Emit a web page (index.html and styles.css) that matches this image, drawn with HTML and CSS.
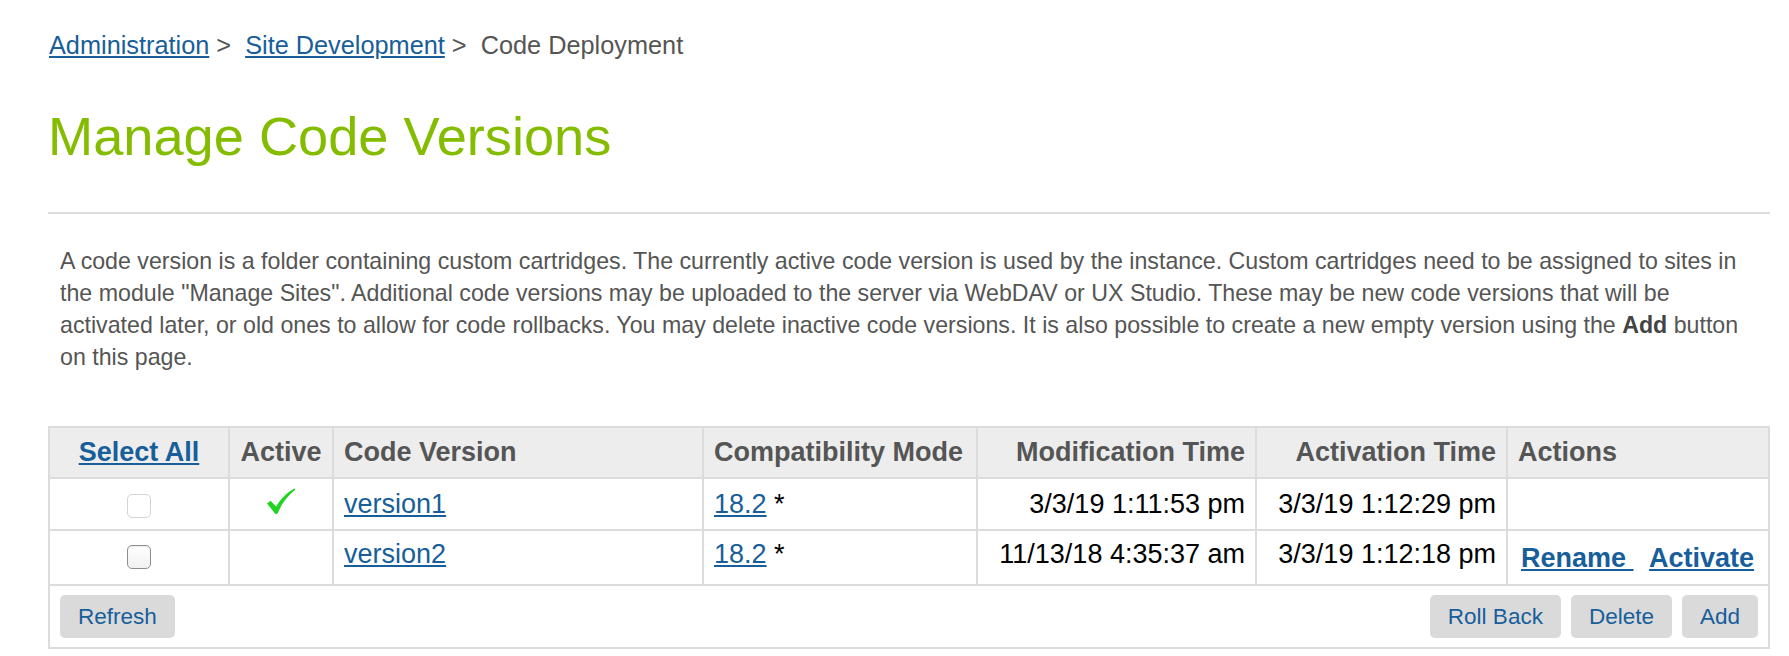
FILE: index.html
```html
<!DOCTYPE html>
<html lang="en">
<head>
<meta charset="utf-8">
<title>Manage Code Versions</title>
<link rel="stylesheet" href="styles.css">
</head>
<body>
<div class="page">
  <nav class="breadcrumb">
    <a href="#">Administration</a> &gt;&nbsp; <a href="#">Site Development</a> &gt;&nbsp; <span>Code Deployment</span>
  </nav>
  <h1 class="title">Manage Code Versions</h1>
  <hr class="divider">
  <p class="intro">A code version is a folder containing custom cartridges. The currently active code version is used by the instance. Custom cartridges need to be assigned to sites in the module "Manage Sites". Additional code versions may be uploaded to the server via WebDAV or UX Studio. These may be new code versions that will be activated later, or old ones to allow for code rollbacks. You may delete inactive code versions. It is also possible to create a new empty version using the <b>Add</b> button on this page.</p>

  <table class="versions">
    <colgroup>
      <col class="c-select">
      <col class="c-active">
      <col class="c-version">
      <col class="c-compat">
      <col class="c-mod">
      <col class="c-act">
      <col class="c-actions">
    </colgroup>
    <thead>
      <tr class="head-row">
        <th class="center"><a href="#" class="strong-link">Select All</a></th>
        <th class="center">Active</th>
        <th class="left">Code Version</th>
        <th class="left">Compatibility Mode</th>
        <th class="right">Modification Time</th>
        <th class="right">Activation Time</th>
        <th class="left">Actions</th>
      </tr>
    </thead>
    <tbody>
      <tr class="row-1">
        <td class="center"><input type="checkbox" class="box box-disabled" disabled></td>
        <td class="center check-cell">
          <svg class="check" width="30" height="27" viewBox="0 0 30 27" aria-label="active">
            <path d="M1 15.5 L4.5 12.8 L10.2 18.6 C15 10.5 21 4.5 28.6 0.6 L29.4 1.6 C21.5 8 15.4 16 11.6 25.6 L9.6 26.2 Z" fill="#22d422"/>
          </svg>
        </td>
        <td><a href="#">version1</a></td>
        <td><a href="#">18.2</a> *</td>
        <td class="right">3/3/19 1:11:53 pm</td>
        <td class="right">3/3/19 1:12:29 pm</td>
        <td></td>
      </tr>
      <tr class="row-2">
        <td class="center"><input type="checkbox" class="box"></td>
        <td class="center"></td>
        <td><a href="#">version2</a></td>
        <td><a href="#">18.2</a> *</td>
        <td class="right">11/13/18 4:35:37 am</td>
        <td class="right">3/3/19 1:12:18 pm</td>
        <td class="actions"><a href="#" class="strong-link">Rename&nbsp;</a> <a href="#" class="strong-link second">Activate</a></td>
      </tr>
      <tr class="foot-row">
        <td colspan="7">
          <div class="toolbar">
            <button class="btn" type="button">Refresh</button>
            <div class="toolbar-right">
              <button class="btn" type="button">Roll Back</button>
              <button class="btn" type="button">Delete</button>
              <button class="btn" type="button">Add</button>
            </div>
          </div>
        </td>
      </tr>
    </tbody>
  </table>
</div>
</body>
</html>
```

FILE: styles.css
```css
* { box-sizing: border-box; }

body {
  margin: 0;
  background: #ffffff;
  font-family: "Liberation Sans", Arial, Helvetica, sans-serif;
  color: #555555;
}

a { color: #175e9a; }

.page {
  margin-left: 48px;
  width: 1722px;
}

.breadcrumb {
  margin: 30px 0 0 1px;
  font-size: 25.3px;
  line-height: 30px;
  color: #555555;
}

.title {
  margin: 46px 0 0 0;
  font-size: 54.2px;
  line-height: 60px;
  font-weight: normal;
  color: #84bd00;
}

.divider {
  margin: 46px 0 0 0;
  height: 2px;
  border: 0;
  background: #dddddd;
}

.intro {
  margin: 31px 0 0 0;
  padding: 0 16px 0 12px;
  font-size: 23.2px;
  line-height: 32px;
  color: #555555;
}

.intro b { color: #444444; }

.versions {
  margin-top: 53px;
  width: 1722px;
  border-collapse: collapse;
  table-layout: fixed;
  border: 2px solid #dcdcdc;
  font-size: 27px;
}

.c-select { width: 180px; }
.c-active { width: 104px; }
.c-version { width: 370px; }
.c-compat { width: 274px; }
.c-mod { width: 279px; }
.c-act { width: 251px; }
.c-actions { width: 262px; }

.versions th,
.versions td {
  border: 2px solid #dcdcdc;
  padding: 0 10px;
  white-space: nowrap;
  text-align: left;
  vertical-align: middle;
}

.versions th {
  height: 51px;
  background: #ededed;
  color: #555555;
  font-weight: bold;
}

.versions td { color: #000000; }

.versions .center { text-align: center; }
.versions .right { text-align: right; }
.versions .left { text-align: left; }

.row-1 td { height: 52px; }

.row-2 td {
  height: 55px;
  padding-bottom: 6px;
}

.row-2 td.actions {
  padding: 2px 10px 0 13px;
}

.strong-link { font-weight: bold; }
.second { margin-left: 8px; }

.check-cell { line-height: 0; }
.check {
  display: inline-block;
  margin-top: -6px;
}

.box {
  -webkit-appearance: none;
  appearance: none;
  display: inline-block;
  width: 24px;
  height: 24px;
  margin: 2px 0 0 0;
  vertical-align: middle;
  border: 1px solid #8e8e8e;
  border-radius: 5px;
  background: linear-gradient(#ffffff, #f1f1f1);
  box-shadow: inset 0 1px 1px rgba(0, 0, 0, 0.08);
}

.box-disabled {
  border-color: #d4d4d4;
  background: #ffffff;
  box-shadow: none;
}

.foot-row td {
  padding: 9px 10px;
}

.toolbar {
  display: flex;
  justify-content: space-between;
  align-items: center;
}

.toolbar-right {
  display: flex;
  gap: 10px;
}

.btn {
  height: 43px;
  padding: 0 18px;
  border: 0;
  border-radius: 5px;
  background: #dadada;
  color: #175e9a;
  font-family: "Liberation Sans", Arial, Helvetica, sans-serif;
  font-size: 22.5px;
}
```
